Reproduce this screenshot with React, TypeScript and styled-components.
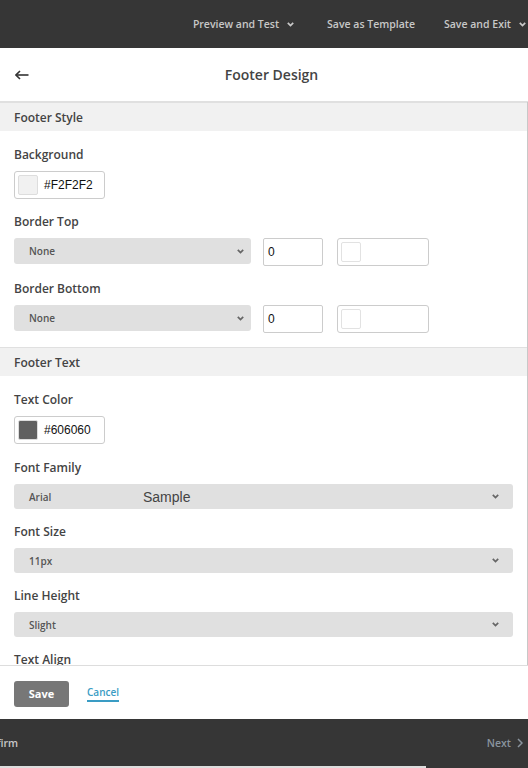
import styled, { createGlobalStyle } from 'styled-components'

const GlobalStyle = createGlobalStyle`
  html, body {
    margin: 0;
    padding: 0;
    overflow: hidden;
  }
  body {
    font-family: "Open Sans", "Noto Sans", sans-serif;
    background: #ffffff;
  }
  * {
    box-sizing: border-box;
  }
`

const Page = styled.div`
  width: 528px;
  height: 768px;
  display: flex;
  flex-direction: column;
  background: #ffffff;
`

const TopBar = styled.div`
  height: 48px;
  flex-shrink: 0;
  background: #363636;
  display: flex;
  justify-content: flex-end;
  align-items: center;
  padding-right: 2px;
  gap: 29px;
`

const TopItem = styled.span<{ $space?: number }>`
  display: flex;
  align-items: center;
  gap: 8px;
  margin-right: ${p => p.$space ?? 0}px;
  color: #c8c8c8;
  font-size: 10.5px;
  font-weight: 600;
  white-space: nowrap;
`

const Header = styled.div`
  height: 54px;
  flex-shrink: 0;
  display: flex;
  align-items: center;
  border-bottom: 1px solid #e0e0e0;
  padding-left: 15px;
`

const Title = styled.h1`
  flex: 1;
  margin: 0;
  padding-right: 14px;
  text-align: center;
  font-size: 14px;
  font-weight: 600;
  color: #444444;
`

const Scroll = styled.div`
  flex: 1;
  overflow-y: scroll;
  overflow-x: hidden;
  border-right: 1px solid #c8c8c8;
  &::-webkit-scrollbar {
    width: 1px;
  }
  &::-webkit-scrollbar-track,
  &::-webkit-scrollbar-thumb {
    background: #ffffff;
  }
`

const SectionHead = styled.div`
  height: 29px;
  background: #f1f1f1;
  border-top: 1px solid #e0e0e0;
  display: flex;
  align-items: center;
  padding-left: 14px;
  font-size: 12px;
  font-weight: 600;
  color: #444444;
`

const Section = styled.div`
  padding: 1px 14px 14px;
`

const Field = styled.div<{ $extra?: number }>`
  padding-top: ${p => 16 + (p.$extra ?? 0)}px;
`

const Label = styled.div`
  font-size: 12px;
  line-height: 14px;
  font-weight: 600;
  color: #444444;
  margin-bottom: 9px;
`

const Row = styled.div`
  display: flex;
  align-items: flex-start;
`

const ColorBox = styled.div<{ $w: number }>`
  width: ${p => p.$w}px;
  height: 28px;
  border: 1px solid #cccccc;
  border-radius: 3px;
  display: flex;
  align-items: center;
  padding-left: 3px;
  gap: 6px;
  font-family: "Liberation Sans", Arial, sans-serif;
  font-size: 12px;
  color: #111111;
`

const Swatch = styled.span<{ $c: string }>`
  width: 20px;
  height: 20px;
  border-radius: 2px;
  background: ${p => p.$c};
  border: 1px solid ${p => (p.$c === '#ffffff' ? '#e2e2e2' : '#dddddd')};
`

const NumberBox = styled.div`
  width: 60px;
  height: 28px;
  margin-left: 12px;
  margin-right: 14px;
  border: 1px solid #cccccc;
  border-radius: 2px;
  display: flex;
  align-items: center;
  padding-left: 4px;
  font-family: "Liberation Sans", Arial, sans-serif;
  font-size: 12px;
  color: #111111;
`

const Select = styled.div<{ $w?: number }>`
  width: ${p => (p.$w ? `${p.$w}px` : '100%')};
  height: ${p => (p.$w ? 26 : 25)}px;
  background: #e0e0e0;
  border-radius: 3px;
  display: flex;
  align-items: center;
  padding: 0 ${p => (p.$w ? 7 : 14)}px 0 15px;
  font-size: 10px;
  font-weight: 600;
  color: #555555;
`

const SelectText = styled.span`
  flex: 1;
  display: flex;
  align-items: center;
`

const FontName = styled.span`
  width: 114px;
`

const Sample = styled.span`
  font-family: "Liberation Sans", Arial, sans-serif;
  font-size: 14px;
  font-weight: 400;
  color: #444444;
`

const ActionBar = styled.div`
  height: 54px;
  flex-shrink: 0;
  border-top: 1px solid #dddddd;
  display: flex;
  align-items: center;
  padding-left: 14px;
  gap: 18px;
`

const SaveButton = styled.button`
  width: 55px;
  height: 26px;
  margin-top: 2px;
  background: #777777;
  border: none;
  border-radius: 3px;
  color: #ffffff;
  font-family: "Open Sans", sans-serif;
  font-size: 11px;
  font-weight: 700;
  padding: 0;
`

const CancelLink = styled.a`
  color: #3a9cc4;
  font-size: 10px;
  font-weight: 600;
  padding-bottom: 1px;
  border-bottom: 2px solid #3a9cc4;
  margin-top: 2px;
`

const BottomBar = styled.div`
  height: 49px;
  flex-shrink: 0;
  background: #363636;
  display: flex;
  flex-direction: column;
  overflow: hidden;
`

const BottomRow = styled.div`
  flex: 1;
  display: flex;
  justify-content: space-between;
  align-items: center;
  padding: 0 5px 0 0;
  font-size: 10.5px;
  font-weight: 600;
`

const Confirm = styled.span`
  color: #c8c8c8;
  margin-left: -23px;
`

const Next = styled.span`
  display: flex;
  align-items: center;
  gap: 6px;
  color: #8a949e;
`

const Progress = styled.div`
  width: 426px;
  height: 2px;
  background: #dddddd;
`

function Chevron({ color = '#666', size = 7 }: { color?: string; size?: number }) {
  return (
    <svg width={size} height={size - 2} viewBox="0 0 7 5">
      <polyline points="0.8,0.8 3.5,3.6 6.2,0.8" fill="none" stroke={color} strokeWidth="1.7" />
    </svg>
  )
}

function BackArrow() {
  return (
    <svg width="14" height="10" viewBox="0 0 14 10">
      <line x1="1" y1="5" x2="13.5" y2="5" stroke="#333" strokeWidth="1.6" />
      <polyline points="5,1 1,5 5,9" fill="none" stroke="#333" strokeWidth="1.6" />
    </svg>
  )
}

function BorderRow() {
  return (
    <Row>
      <Select $w={237}>
        <SelectText>None</SelectText>
        <Chevron />
      </Select>
      <NumberBox>0</NumberBox>
      <ColorBox $w={92}>
        <Swatch $c="#ffffff" />
      </ColorBox>
    </Row>
  )
}

function FullSelect({ text }: { text: string }) {
  return (
    <Select>
      <SelectText>{text}</SelectText>
      <Chevron />
    </Select>
  )
}

export default function App() {
  return (
    <>
      <GlobalStyle />
      <Page>
        <TopBar>
          <TopItem $space={4}>
            Preview and Test <Chevron color="#c8c8c8" />
          </TopItem>
          <TopItem>Save as Template</TopItem>
          <TopItem>
            Save and Exit <Chevron color="#c8c8c8" />
          </TopItem>
        </TopBar>
        <Header>
          <BackArrow />
          <Title>Footer Design</Title>
        </Header>
        <Scroll>
          <SectionHead>Footer Style</SectionHead>
          <Section>
            <Field>
              <Label>Background</Label>
              <ColorBox $w={91}>
                <Swatch $c="#f1f1f1" />
                #F2F2F2
              </ColorBox>
            </Field>
            <Field>
              <Label>Border Top</Label>
              <BorderRow />
            </Field>
            <Field>
              <Label>Border Bottom</Label>
              <BorderRow />
            </Field>
          </Section>
          <SectionHead>Footer Text</SectionHead>
          <Section>
            <Field>
              <Label>Text Color</Label>
              <ColorBox $w={91}>
                <Swatch $c="#606060" />
                #606060
              </ColorBox>
            </Field>
            <Field $extra={1}>
              <Label>Font Family</Label>
              <Select>
                <SelectText>
                  <FontName>Arial</FontName>
                  <Sample>Sample</Sample>
                </SelectText>
                <Chevron />
              </Select>
            </Field>
            <Field>
              <Label>Font Size</Label>
              <FullSelect text="11px" />
            </Field>
            <Field>
              <Label>Line Height</Label>
              <FullSelect text="Slight" />
            </Field>
            <Field>
              <Label>Text Align</Label>
              <FullSelect text="Left" />
            </Field>
          </Section>
        </Scroll>
        <ActionBar>
          <SaveButton>Save</SaveButton>
          <CancelLink>Cancel</CancelLink>
        </ActionBar>
        <BottomBar>
          <BottomRow>
            <Confirm>Confirm</Confirm>
            <Next>
              Next
              <svg width="6" height="10" viewBox="0 0 6 10">
                <polyline points="1,1 5,5 1,9" fill="none" stroke="#8a949e" strokeWidth="1.5" />
              </svg>
            </Next>
          </BottomRow>
          <Progress />
        </BottomBar>
      </Page>
    </>
  )
}
